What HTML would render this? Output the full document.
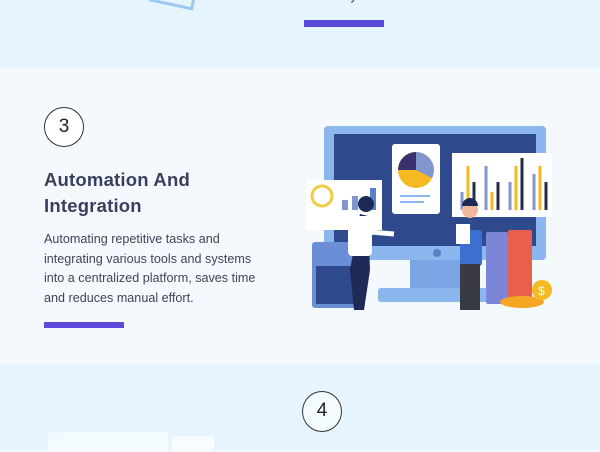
<!DOCTYPE html>
<html><head><meta charset="utf-8"><style>
*{margin:0;padding:0;box-sizing:border-box}
body{width:600px;height:450px;overflow:hidden;font-family:"Liberation Sans",sans-serif;position:relative;background:#f4f9fe}
.s1{position:absolute;left:0;top:0;width:600px;height:68px;background:#e6f5fd}
.s3{position:absolute;left:0;top:364px;width:600px;height:86px;background:#e6f5fd}
.circ{position:absolute;width:40px;height:40px;border:1.5px solid #333;border-radius:50%;text-align:center;line-height:37px;font-size:19px;color:#222;background:#fff}
.bar{position:absolute;height:7px;background:#5b4bdb}
h2{position:absolute;left:44px;top:167px;font-size:18.5px;line-height:26px;color:#3a3f5c;font-weight:bold;letter-spacing:0.2px}
p{position:absolute;left:44px;top:230px;width:230px;font-size:12.6px;line-height:19.5px;color:#3f4458}
</style></head><body>
<div class="s1"></div>
<div style="position:absolute;left:305px;top:-12px;font-size:13px;color:#3f4458">smoothly.</div>
<div style="position:absolute;left:150px;top:-10px;width:45px;height:16px;border:3px solid #9cc7f2;transform:rotate(12deg)"></div>
<div class="bar" style="left:304px;top:20px;width:80px"></div>
<div class="circ" style="left:44px;top:107px">3</div>
<h2>Automation And<br>Integration</h2>
<p>Automating repetitive tasks and integrating various tools and systems into a centralized platform, saves time and reduces manual effort.</p>
<div class="bar" style="left:44px;top:322px;width:80px;height:6px"></div>
<svg style="position:absolute;left:300px;top:120px" width="270" height="200" viewBox="0 0 270 200">
<rect x="24" y="6" width="222" height="134" rx="4" fill="#8cb6ee"/>
<rect x="34" y="14" width="202" height="112" fill="#2f4a8c"/>
<rect x="110" y="140" width="50" height="30" fill="#7aa6e6"/>
<rect x="78" y="168" width="120" height="14" rx="3" fill="#8cb6ee"/>
<circle cx="137" cy="133" r="4" fill="#5a82c8"/>
<rect x="92" y="24" width="48" height="70" rx="3" fill="#fff"/>
<circle cx="116" cy="50" r="18" fill="#f5b921"/>
<path d="M116 50 L116 32 A18 18 0 0 1 132 58 Z" fill="#8196cf"/>
<path d="M116 50 L98 50 A18 18 0 0 1 116 32 Z" fill="#3a3270"/>
<rect x="100" y="75" width="30" height="2" fill="#8cb6ee"/><rect x="100" y="81" width="24" height="2" fill="#8cb6ee"/>
<rect x="152" y="33" width="100" height="64" fill="#fff"/>
<g stroke-width="3"><line x1="162" y1="90" x2="162" y2="72" stroke="#8196cf"/><line x1="168" y1="90" x2="168" y2="46" stroke="#f5b921"/><line x1="174" y1="90" x2="174" y2="62" stroke="#2a2a4a"/><line x1="186" y1="90" x2="186" y2="46" stroke="#8196cf"/><line x1="192" y1="90" x2="192" y2="72" stroke="#f5b921"/><line x1="198" y1="90" x2="198" y2="62" stroke="#2a2a4a"/><line x1="210" y1="90" x2="210" y2="62" stroke="#8196cf"/><line x1="216" y1="90" x2="216" y2="46" stroke="#f5b921"/><line x1="222" y1="90" x2="222" y2="38" stroke="#2a2a4a"/><line x1="234" y1="90" x2="234" y2="54" stroke="#8196cf"/><line x1="240" y1="90" x2="240" y2="46" stroke="#f5b921"/><line x1="246" y1="90" x2="246" y2="62" stroke="#2a2a4a"/></g>
<rect x="6" y="60" width="76" height="50" fill="#fff"/>
<circle cx="22" cy="76" r="10" fill="none" stroke="#f5c94a" stroke-width="3"/>
<rect x="42" y="80" width="6" height="10" fill="#8196cf"/><rect x="52" y="76" width="6" height="14" fill="#8196cf"/><rect x="70" y="68" width="6" height="22" fill="#5a82c8"/>
<rect x="12" y="122" width="48" height="66" rx="3" fill="#6b8fd6"/>
<rect x="16" y="146" width="40" height="38" fill="#2f4a8c"/>
<path d="M60 94 L68 96 L70 150 L64 190 L54 190 L50 150 Z" fill="#1d2a55"/>
<rect x="48" y="96" width="24" height="40" rx="4" fill="#fff"/>
<circle cx="66" cy="84" r="8" fill="#1d2a55"/>
<line x1="70" y1="112" x2="94" y2="114" stroke="#fff" stroke-width="5"/>
<rect x="160" y="110" width="22" height="36" rx="3" fill="#3d6fd0"/>
<rect x="160" y="144" width="20" height="46" fill="#3a3a44"/>
<circle cx="170" cy="90" r="8" fill="#f0b79a"/><path d="M162 86 A8 8 0 0 1 178 86 Z" fill="#1d2a55"/>
<rect x="156" y="104" width="14" height="20" fill="#fff"/>
<rect x="186" y="112" width="22" height="72" rx="2" fill="#7b86d8"/>
<rect x="208" y="110" width="24" height="74" rx="2" fill="#e8604c"/>
<ellipse cx="222" cy="182" rx="22" ry="6" fill="#f5a623"/>
<circle cx="242" cy="170" r="10" fill="#f5b921"/><text x="238" y="175" font-size="12" fill="#fff" font-family="Liberation Sans">$</text>
</svg>
<div class="s3"></div>
<div class="circ" style="left:302px;top:391px;width:40px;height:41px;background:#f4fbff">4</div>
<div style="position:absolute;left:48px;top:432px;width:120px;height:20px;background:#f4fbff;border-radius:4px"></div>
<div style="position:absolute;left:172px;top:436px;width:42px;height:16px;background:#f8fcff;border-radius:4px"></div>
</body></html>
